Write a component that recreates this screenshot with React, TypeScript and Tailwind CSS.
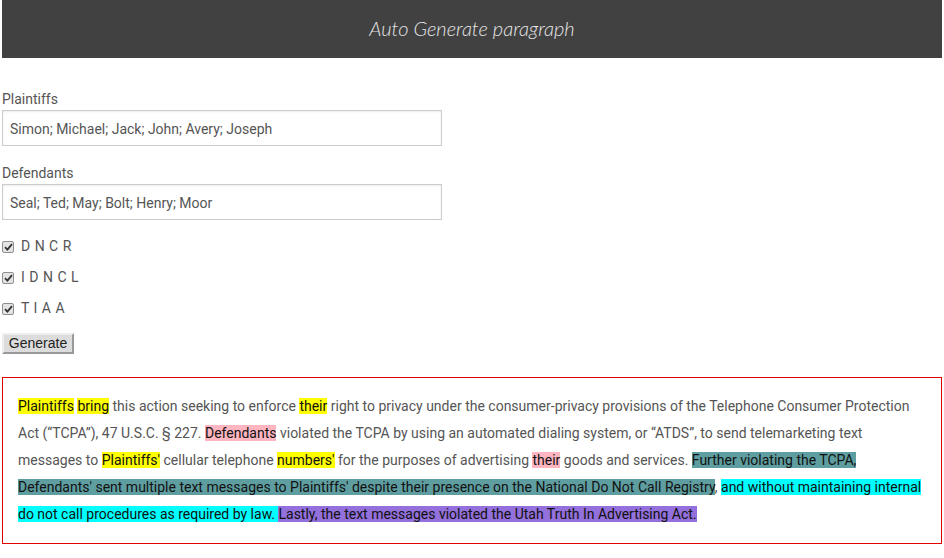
import React from "react";

function Check() {
  return (
    <span className="inline-flex h-[12px] w-[12px] items-center justify-center rounded-[2px] border border-[#8f8f8f] bg-[#e4e4e4]">
      <svg width="9" height="8" viewBox="0 0 9 8">
        <path d="M1 4.2 L3.4 6.6 L8 1.2" fill="none" stroke="#333" strokeWidth="1.8" />
      </svg>
    </span>
  );
}

const Y = ({ children }: { children: React.ReactNode }) => (
  <span className="bg-[#ffff00] text-[#111]">{children}</span>
);
const P = ({ children }: { children: React.ReactNode }) => (
  <span className="bg-[#ffb6c1] text-[#111]">{children}</span>
);

export default function App() {
  return (
    <div className="w-[944px] h-[558px] bg-white px-[2px] font-['Roboto',sans-serif] text-[14px] text-[#555]">
      <div className="flex h-[58px] w-[940px] items-center justify-center bg-[#414141] pb-[2px]">
        <span className="font-['Lato',sans-serif] text-[20px] italic font-light text-[#e6e6e6]">
          Auto Generate paragraph
        </span>
      </div>

      <div className="mt-[31px] flex flex-col">
        <div className="h-[20px] leading-[20px]">Plaintiffs</div>
        <div className="mt-[1px] flex h-[36px] w-[440px] items-center border border-[#ccc] pl-[7px] pt-[2px] shadow-[inset_0_1px_2px_rgba(0,0,0,0.08)]">
          Simon; Michael; Jack; John; Avery; Joseph
        </div>
        <div className="mt-[17px] h-[20px] leading-[20px]">Defendants</div>
        <div className="mt-[1px] flex h-[36px] w-[440px] items-center border border-[#ccc] pl-[7px] pt-[2px] shadow-[inset_0_1px_2px_rgba(0,0,0,0.08)]">
          Seal; Ted; May; Bolt; Henry; Moor
        </div>
      </div>

      <div className="mt-[11px] flex flex-col">
        {["D N C R", "I D N C L", "T I A A"].map((t) => (
          <div key={t} className="flex h-[31px] items-center gap-[7px]">
            <Check />
            <span className="tracking-[0.5px]">{t}</span>
          </div>
        ))}
      </div>

      <div className="mt-[9px]">
        <button className="h-[21px] w-[72px] border-2 border-[#eee] border-r-[#999] border-b-[#999] bg-[#dcdcdc] px-[4px] font-['Liberation_Sans',sans-serif] text-[14px] leading-[15px] text-[#222]">
          Generate
        </button>
      </div>

      <div className="mt-[23px] w-[940px] border border-[#e00000] px-[15px] py-[15px] leading-[27px]">
        <Y>Plaintiffs</Y> <Y>bring</Y> this action seeking to enforce <Y>their</Y> right to privacy under the
        consumer-privacy provisions of the Telephone Consumer Protection Act (“TCPA”), 47 U.S.C. § 227.{" "}
        <P>Defendants</P> violated the TCPA by using an automated dialing system, or “ATDS”, to send
        telemarketing text messages to <Y>Plaintiffs'</Y> cellular telephone <Y>numbers'</Y> for the purposes of
        advertising <P>their</P> goods and services.{" "}
        <span className="bg-[#5f9ea0] text-[#111]">
          Further violating the TCPA, Defendants' sent multiple text messages to Plaintiffs' despite their presence on
          the National Do Not Call Registry
        </span>
        , <span className="bg-[#00ffff] text-[#111]">and without maintaining internal do not call procedures as required by law. </span>
        <span className="bg-[#9370db] text-[#111]">Lastly, the text messages violated the Utah Truth In Advertising Act.</span>
      </div>
    </div>
  );
}
